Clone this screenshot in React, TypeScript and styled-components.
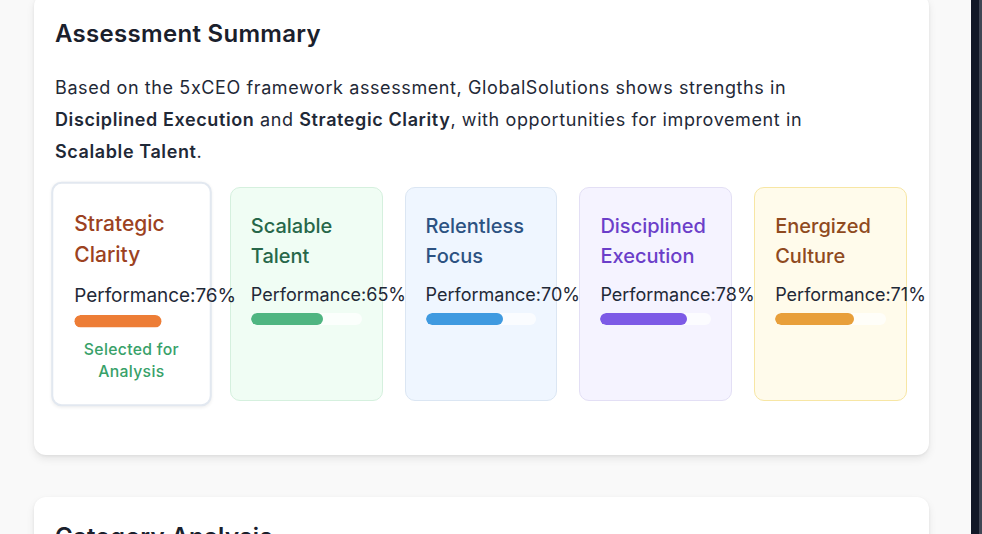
import styled, { createGlobalStyle } from 'styled-components';

type Pillar = {
	name: string[];
	score: number;
	bg: string;
	border: string;
	title: string;
	bar: string;
	selected?: boolean;
};

const pillars: Pillar[] = [
	{ name: ['Strategic', 'Clarity'], score: 76, bg: '#ffffff', border: '#e2e8f0', title: '#9c4221', bar: '#ed7d36', selected: true },
	{ name: ['Scalable', 'Talent'], score: 65, bg: '#f0fdf4', border: '#d5f0de', title: '#276749', bar: '#4fb581' },
	{ name: ['Relentless', 'Focus'], score: 70, bg: '#eff6ff', border: '#dbe6f3', title: '#2c5282', bar: '#3f9ae0' },
	{ name: ['Disciplined', 'Execution'], score: 78, bg: '#f5f3ff', border: '#e3dff5', title: '#6b3ec9', bar: '#7d5ae6' },
	{ name: ['Energized', 'Culture'], score: 71, bg: '#fffbeb', border: '#f7e6a4', title: '#8f4a1e', bar: '#e89f3a' },
];

const App = () => {
	return (
		<>
			<GlobalStyle />
			<Layout>
				<Main>
					<Panel>
						<Heading>Assessment Summary</Heading>
						<Summary>
							Based on the 5xCEO framework assessment, GlobalSolutions shows strengths in{' '}
							<strong>Disciplined Execution</strong> and <strong>Strategic Clarity</strong>, with
							opportunities for improvement in <strong>Scalable Talent</strong>.
						</Summary>
						<PillarGrid>
							{pillars.map((p) => (
								<PillarCard key={p.name.join(' ')} bg={p.bg} border={p.border} selected={p.selected}>
									<PillarTitle color={p.title}>
										{p.name[0]}
										<br />
										{p.name[1]}
									</PillarTitle>
									<Performance>Performance:{p.score}%</Performance>
									<Track>
										<Fill color={p.bar} style={{ width: `${p.score}%` }} />
									</Track>
									{p.selected && <SelectedNote>Selected for Analysis</SelectedNote>}
								</PillarCard>
							))}
						</PillarGrid>
					</Panel>
					<Panel>
						<Heading>Category Analysis</Heading>
					</Panel>
				</Main>
				<SideStrip />
			</Layout>
		</>
	);
};

const GlobalStyle = createGlobalStyle`
	html, body {
		margin: 0;
		padding: 0;
		height: 100%;
		overflow: hidden;
		background: #f9f9f9;
	}
	body {
		font-family: Inter, "Noto Sans", "Liberation Sans", sans-serif;
		color: #1f2937;
	}
`;

const Layout = styled.div`
	display: flex;
	height: 534px;
	overflow: hidden;
	background: #f9f9f9;
`;

const Main = styled.div`
	flex: 1;
	display: flex;
	flex-direction: column;
	gap: 42px;
	padding: 0 42px 0 34px;
	margin-top: -6px;
`;

const SideStrip = styled.div`
	width: 11px;
	background: #111827;
	border-right: 3px solid #3f4654;
	box-sizing: border-box;
`;

const Panel = styled.section`
	background: #ffffff;
	border-radius: 12px;
	box-shadow: 0 4px 8px rgba(0, 0, 0, 0.08), 0 1px 3px rgba(0, 0, 0, 0.06);
	padding: 24px 22px 54px 21px;
`;

const Heading = styled.h2`
	margin: 0 0 22px;
	font-size: 24px;
	line-height: 32px;
	font-weight: 600;
	color: #1a202c;
	letter-spacing: 0.3px;
`;

const Summary = styled.p`
	margin: 0 0 19px;
	max-width: 800px;
	font-size: 18px;
	line-height: 32px;
	letter-spacing: 0.6px;
	color: #1f2937;

	strong {
		font-weight: 600;
	}
`;

const PillarGrid = styled.div`
	display: grid;
	grid-template-columns: repeat(5, 1fr);
	gap: 22px;
`;

const PillarCard = styled.div<{ bg: string; border: string; selected?: boolean }>`
	height: 214px;
	box-sizing: border-box;
	padding: 23px 20px 0;
	border-radius: 10px;
	background: ${({ bg }) => bg};
	border: ${({ selected }) => (selected ? 2 : 1)}px solid ${({ border }) => border};
	transform: ${({ selected }) => (selected ? 'scale(1.05)' : 'none')};
	box-shadow: ${({ selected }) => (selected ? '0 1px 3px rgba(0,0,0,0.06)' : 'none')};
	display: flex;
	flex-direction: column;
	min-width: 0;
`;

const PillarTitle = styled.div<{ color: string }>`
	font-size: 20px;
	line-height: 30px;
	font-weight: 500;
	color: ${({ color }) => color};
`;

const Performance = styled.div`
	margin-top: 10px;
	font-size: 18px;
	line-height: 27px;
	white-space: nowrap;
	color: #1f2937;
`;

const Track = styled.div`
	margin-top: 5px;
	height: 12px;
	border-radius: 6px;
	background: rgba(255, 255, 255, 0.7);
	overflow: hidden;
`;

const Fill = styled.div<{ color: string }>`
	height: 100%;
	border-radius: 6px;
	background: ${({ color }) => color};
`;

const SelectedNote = styled.div`
	margin-top: 10px;
	text-align: center;
	font-size: 15px;
	line-height: 21px;
	font-weight: 500;
	letter-spacing: 0.3px;
	color: #38a169;
`;

export default App;
